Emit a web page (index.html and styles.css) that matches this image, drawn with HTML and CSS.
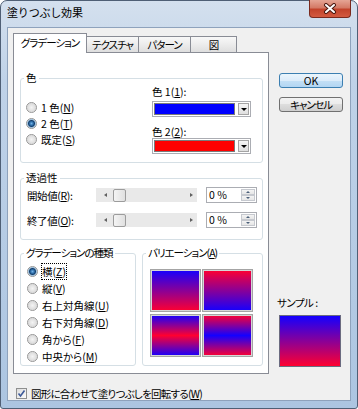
FILE: index.html
```html
<!DOCTYPE html>
<html lang="ja">
<head>
  <meta charset="UTF-8">
  <title>塗りつぶし効果</title>
  <link rel="stylesheet" href="styles.css">
</head>
<body>

  <div class="window">
    <!-- タイトルバー -->
    <div class="titlebar">
      <span class="title">塗りつぶし効果</span>
      <div class="close">
        <svg width="14" height="11" viewBox="0 0 14 11">
          <path d="M3 2 L11 9 M11 2 L3 9" stroke="#4a1810" stroke-width="4" stroke-linecap="round"/>
          <path d="M3 2 L11 9 M11 2 L3 9" stroke="#fff" stroke-width="2" stroke-linecap="round"/>
        </svg>
      </div>
    </div>

    <div class="client">
      <div class="body">
        <div class="main">
          <!-- タブ -->
          <div class="tabs">
            <div class="tab active">グラデーション</div>
            <div class="tab">テクスチャ</div>
            <div class="tab">パターン</div>
            <div class="tab">図</div>
          </div>

          <div class="panel">
            <!-- 色 -->
            <fieldset class="group group-color">
              <legend>色</legend>
              <div class="group-body color-body">
                <div class="color-radios">
                  <div class="radio"><i class="dot"></i><span>1 色(<u>N</u>)</span></div>
                  <div class="radio"><i class="dot on"></i><span>2 色(<u>T</u>)</span></div>
                  <div class="radio"><i class="dot"></i><span>既定(<u>S</u>)</span></div>
                </div>
                <div class="color-pick">
                  <div class="pick-label">色 1(<u>1</u>):</div>
                  <div class="combo"><span class="swatch blue"></span><span class="drop"><i></i></span></div>
                  <div class="pick-label second">色 2(<u>2</u>):</div>
                  <div class="combo"><span class="swatch red"></span><span class="drop"><i></i></span></div>
                </div>
              </div>
            </fieldset>

            <!-- 透過性 -->
            <fieldset class="group group-alpha">
              <legend>透過性</legend>
              <div class="group-body alpha-body">
                <div class="alpha-row">
                  <span class="alpha-label">開始値(<u>R</u>):</span>
                  <div class="slider"><i class="arr-l"></i><span class="thumb"></span><i class="arr-r"></i></div>
                  <div class="spin"><span class="spin-val">0 %</span><span class="spin-btns"><i class="up"></i><i class="down"></i></span></div>
                </div>
                <div class="alpha-row">
                  <span class="alpha-label">終了値(<u>O</u>):</span>
                  <div class="slider"><i class="arr-l"></i><span class="thumb"></span><i class="arr-r"></i></div>
                  <div class="spin"><span class="spin-val">0 %</span><span class="spin-btns"><i class="up"></i><i class="down"></i></span></div>
                </div>
              </div>
            </fieldset>

            <div class="bottom-groups">
              <!-- グラデーションの種類 -->
              <fieldset class="group group-type">
                <legend>グラデーションの種類</legend>
                <div class="group-body type-body">
                  <div class="radio"><i class="dot on"></i><span class="focus">横(<u>Z</u>)</span></div>
                  <div class="radio"><i class="dot"></i><span>縦(<u>V</u>)</span></div>
                  <div class="radio"><i class="dot"></i><span>右上対角線(<u>U</u>)</span></div>
                  <div class="radio"><i class="dot"></i><span>右下対角線(<u>D</u>)</span></div>
                  <div class="radio"><i class="dot"></i><span>角から(<u>F</u>)</span></div>
                  <div class="radio"><i class="dot"></i><span>中央から(<u>M</u>)</span></div>
                </div>
              </fieldset>

              <!-- バリエーション -->
              <fieldset class="group group-var">
                <legend>バリエーション(<u>A</u>)</legend>
                <div class="group-body var-body">
                  <div class="tile v1"></div>
                  <div class="tile v2"></div>
                  <div class="tile v3"></div>
                  <div class="tile v4"></div>
                </div>
              </fieldset>
            </div>
          </div>
        </div>

        <!-- 右側のボタンとサンプル -->
        <div class="side">
          <button class="btn default">OK</button>
          <button class="btn">キャンセル</button>
          <div class="sample-label">サンプル :</div>
          <div class="sample"></div>
        </div>
      </div>

      <div class="rotate">
        <span class="check">
          <svg width="9" height="9" viewBox="0 0 9 9"><path d="M1.5 4.5 L3.5 7 L7.5 1.5" stroke="#3d5a99" stroke-width="1.6" fill="none"/></svg>
        </span>
        <span class="rotate-text">図形に合わせて塗りつぶしを回転する(<u>W</u>)</span>
      </div>
    </div>
  </div>

</body>
</html>
```

FILE: styles.css
```css
* {
  box-sizing: border-box;
}

body {
  margin: 0;
  font-family: "Noto Sans CJK JP", "Liberation Sans", sans-serif;
  font-size: 10.5px;
  color: #000;
  font-feature-settings: "palt";
}

u {
  text-decoration: underline;
  text-underline-offset: 1px;
}

/* ウィンドウ枠 */
.window {
  width: 358px;
  height: 409px;
  border: 1px solid #4f5f75;
  border-radius: 7px 7px 3px 3px;
  background: linear-gradient(#d4e0ee, #bfd2e8 80px, #acc5e1);
  padding: 0 6px 7px;
  display: flex;
  flex-direction: column;
}

.titlebar {
  height: 26px;
  display: flex;
  align-items: flex-start;
}

.title {
  padding-top: 4px;
  line-height: 15px;
  font-size: 11px;
  font-feature-settings: normal;
  letter-spacing: -0.2px;
}

.close {
  margin: -1px 0 0 auto;
  width: 42px;
  height: 18px;
  border: 1px solid #7a2a1e;
  border-top: 0;
  border-radius: 0 0 4px 4px;
  background: linear-gradient(#e5a595, #d47a66 45%, #c2432b 55%, #d35a40);
  display: flex;
  align-items: center;
  justify-content: center;
}

.client {
  flex: 1;
  background: #f0f0f0;
  border: 1px solid #8ea2bc;
  padding: 5px 7px 0 5px;
  display: flex;
  flex-direction: column;
}

.body {
  display: flex;
  gap: 10px;
}

.main {
  width: 256px;
}

/* タブ */
.tabs {
  display: flex;
  align-items: flex-end;
  height: 19px;
}

.tab {
  height: 16px;
  border: 1px solid #898c95;
  border-bottom: 0;
  background: linear-gradient(#f8f8f8, #ececec 50%, #dedede);
  text-align: center;
  line-height: 15px;
  letter-spacing: -1px;
}

.tab + .tab {
  margin-left: -1px;
}

.tab:nth-child(1) { width: 74px; }
.tab:nth-child(2) { width: 53px; }
.tab:nth-child(3) { width: 53px; }
.tab:nth-child(4) { width: 47px; }

.tab.active {
  height: 20px;
  margin-bottom: -1px;
  background: #fff;
  line-height: 18px;
  position: relative;
  z-index: 1;
}

.panel {
  height: 322px;
  border: 1px solid #898c95;
  background: #fff;
  padding: 0 5px 0 6px;
}

/* グループボックス */
.group {
  margin: 0;
  padding: 0;
  min-width: 0;
  border: 1px solid #d5dfe5;
  border-radius: 3px;
}

.group legend {
  margin-left: 3px;
  padding: 0 2px;
  line-height: 14px;
}

.group-color {
  margin-top: 18px;
}

.color-body {
  display: flex;
  justify-content: space-between;
  padding-right: 11px;
}

.color-radios {
  padding: 14px 0 0 5px;
}

.radio {
  height: 16px;
  display: flex;
  align-items: center;
  gap: 4px;
}

.dot {
  width: 11px;
  height: 11px;
  border-radius: 50%;
  border: 1px solid #959595;
  background: radial-gradient(circle, #f4f4f4 0, #e2e2e2 3px, #dcdcdc 4px, #fbfbfb 5px);
}

.dot.on {
  background: radial-gradient(circle, #74b3e6 0, #2a6aa6 2px, #173f6a 3px, #9cc3e3 4px, #f4f4f4 5px);
}

.color-pick {
  width: 99px;
  padding: 1px 0 8px;
}

.pick-label {
  line-height: 12px;
}

.pick-label.second {
  margin-top: 9px;
}

.combo {
  margin-top: 3px;
  height: 16px;
  border: 1px solid #abadb3;
  background: #fff;
  padding: 1px;
  display: flex;
  gap: 3px;
}

.pick-label.second + .combo {
  margin-top: 0;
}

.swatch {
  flex: 1;
  border: 1px solid #7a7a7a;
}

.swatch.blue {
  background: #0000ff;
}

.swatch.red {
  background: #ff0000;
}

.drop {
  width: 11px;
  border: 1px solid #a4a4a4;
  background: linear-gradient(#f6f6f6, #dfdfdf);
  display: flex;
  align-items: center;
  justify-content: center;
}

.drop i {
  border-left: 3px solid transparent;
  border-right: 3px solid transparent;
  border-top: 3px solid #000;
}

/* 透過性 */
.group-alpha {
  margin-top: 8px;
}

.alpha-body {
  padding: 2px 4px 11px 6px;
  display: flex;
  flex-direction: column;
  gap: 9px;
}

.alpha-row {
  height: 16px;
  display: flex;
  align-items: center;
}

.alpha-label {
  width: 69px;
  letter-spacing: -0.4px;
}

.slider {
  width: 101px;
  height: 14px;
  background: #e9e9e9;
  display: flex;
  align-items: center;
  padding: 0 4px 0 8px;
}

.arr-l {
  border-top: 2px solid transparent;
  border-bottom: 2px solid transparent;
  border-right: 3px solid #606060;
}

.arr-r {
  margin-left: auto;
  border-top: 2px solid transparent;
  border-bottom: 2px solid transparent;
  border-left: 3px solid #606060;
}

.thumb {
  margin-left: 6px;
  width: 13px;
  height: 13px;
  border: 1px solid #9c9c9c;
  border-radius: 2px;
  background: linear-gradient(90deg, #f4f4f4, #e0e0e0);
}

.spin {
  margin-left: 9px;
  width: 51px;
  height: 16px;
  border: 1px solid #abadb3;
  background: #fff;
  display: flex;
  padding: 0 1px 0 2px;
}

.spin-val {
  flex: 1;
  line-height: 14px;
}

.spin-btns {
  width: 14px;
  display: flex;
  flex-direction: column;
  padding: 1px 0;
}

.spin-btns i {
  flex: 1;
  border: 1px solid #c6c9cf;
  background: linear-gradient(#f4f4f4, #e6e6e6);
  display: flex;
  align-items: center;
  justify-content: center;
}

.spin-btns i::after {
  content: "";
  border-left: 2px solid transparent;
  border-right: 2px solid transparent;
}

.spin-btns .up::after {
  border-bottom: 2px solid #4c607a;
}

.spin-btns .down::after {
  border-top: 2px solid #4c607a;
}

/* 下段のグループ */
.bottom-groups {
  margin-top: 6px;
  display: flex;
  gap: 6px;
}

.group-type {
  width: 116px;
}

.group-type legend,
.group-var legend {
  letter-spacing: -1px;
}

.type-body {
  padding: 3px 0 0 6px;
}

.type-body .radio {
  height: 17px;
}

.focus {
  outline: 1px dotted #000;
  outline-offset: 0;
}

.group-var {
  width: 121px;
}

.var-body {
  padding: 9px 0 7px 7px;
  display: grid;
  grid-template-columns: 51px 51px;
  grid-auto-rows: 43px;
  gap: 2px 1px;
}

.tile {
  border: 1px solid #a4a4a4;
  box-shadow: inset 0 0 0 1px #d6d6d6;
}

.v1 {
  background: linear-gradient(#1400ff, #ff0030);
}

.v2 {
  background: linear-gradient(#ff0030, #1400ff);
}

.v3 {
  background: linear-gradient(#1400ff, #ff0030 50%, #1400ff);
}

.v4 {
  background: linear-gradient(#ff0030, #1400ff 50%, #ff0030);
}

/* 右側 */
.side {
  width: 64px;
  display: flex;
  flex-direction: column;
  padding-bottom: 7px;
}

.btn {
  height: 15px;
  width: 64px;
  padding: 0;
  border: 1px solid #707070;
  border-radius: 3px;
  background: linear-gradient(#f2f2f2, #ebebeb 50%, #dddddd 50%, #cfcfcf);
  font: inherit;
  line-height: 13px;
  color: #000;
  letter-spacing: -1.2px;
}

.btn.default {
  margin-top: 40px;
  border-color: #3c7fb1;
  background: linear-gradient(#eaf5fc, #dcecfa 50%, #c4e0f6 50%, #b2d5f2);
  letter-spacing: 0;
}

.btn + .btn {
  margin-top: 9px;
}

.sample-label {
  margin-top: auto;
  line-height: 14px;
  margin-left: -2px;
  letter-spacing: -0.5px;
}

.sample {
  margin-top: 5px;
  width: 62px;
  height: 52px;
  border: 1px solid #6b6b80;
  background: linear-gradient(#1400ff, #ff0030);
}

/* チェックボックス */
.rotate {
  margin: 12px 0 0 3px;
  height: 14px;
  display: flex;
  align-items: center;
  gap: 4px;
}

.rotate-text {
  letter-spacing: -0.75px;
}

.check {
  width: 11px;
  height: 11px;
  border: 1px solid #8e8f8f;
  background: linear-gradient(135deg, #dcdcdc, #fbfbfb);
  display: flex;
  align-items: center;
  justify-content: center;
}

.check svg {
  display: block;
}
```
